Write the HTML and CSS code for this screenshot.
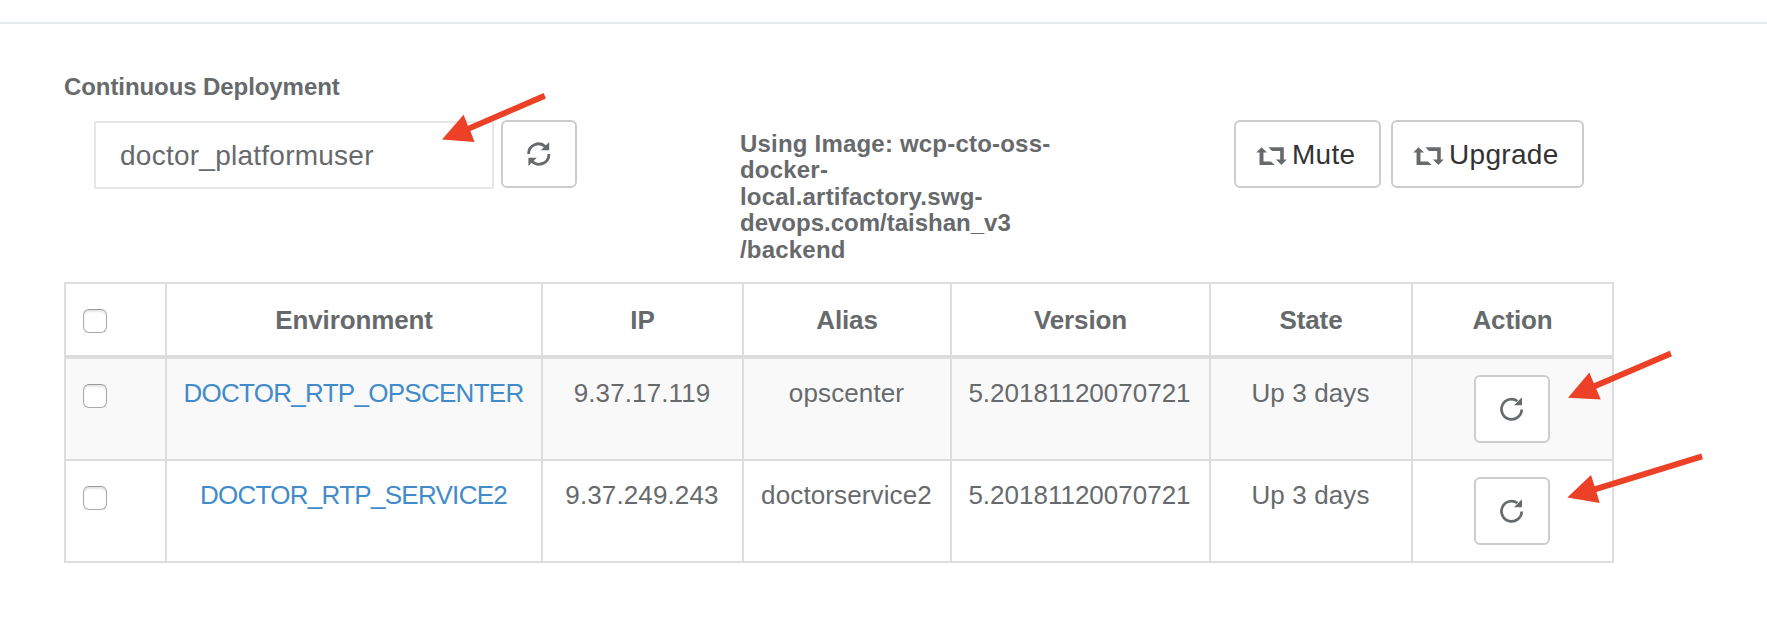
FILE: index.html
```html
<!DOCTYPE html>
<html lang="en">
<head>
<meta charset="utf-8">
<title>Continuous Deployment</title>
<link rel="stylesheet" href="styles.css">
</head>
<body>
<svg class="defs" width="0" height="0">
  <symbol id="retweet" viewBox="0 0 93 55">
    <path d="M16 1 33 17H22V44H45L56 55H10V17H0ZM37 1H84V38H93L77 55 60 38H73V12H48Z"/>
  </symbol>
  <symbol id="repeat" viewBox="0 0 24 24">
    <path d="M21.7 12.4A10.1 10.1 0 1 1 17.4 4" fill="none" stroke="#676a6c" stroke-width="2.7"/>
    <path d="M22 .3V8.3H14Z"/>
  </symbol>
  <symbol id="refresh" viewBox="0 0 24 24">
    <path d="M1.6 12A9.9 9.9 0 0 1 18.4 4.7M21.9 12A9.9 9.9 0 0 1 5 19.3" fill="none" stroke="#676a6c" stroke-width="2.8"/>
    <path d="M22.2 0V8.2H13.8ZM1.4 24V15.8H9.8Z"/>
  </symbol>
</svg>
<div class="topline"></div>
<main class="panel">
  <h5 class="title">Continuous Deployment</h5>
  <div class="toolbar">
    <input class="user" type="text" value="doctor_platformuser">
    <button class="btn square"><svg class="icon"><use href="#refresh"/></svg></button>
    <h5 class="image">Using Image: wcp-cto-oss-<br>docker-<br>local.artifactory.swg-<br><span class="path">devops.com/taishan_v3</span><br>/backend</h5>
    <div class="actions">
      <button class="btn mute"><svg class="retweet"><use href="#retweet"/></svg><span class="label">Mute</span></button>
      <button class="btn upgrade"><svg class="retweet"><use href="#retweet"/></svg><span class="label">Upgrade</span></button>
    </div>
  </div>
  <table class="grid">
    <colgroup><col class="c1"><col class="c2"><col class="c3"><col class="c4"><col class="c5"><col class="c6"><col class="c7"></colgroup>
    <thead>
      <tr><th class="check"><input type="checkbox"></th><th>Environment</th><th>IP</th><th>Alias</th><th>Version</th><th>State</th><th>Action</th></tr>
    </thead>
    <tbody>
      <tr><td class="check"><input type="checkbox"></td><td><a>DOCTOR_RTP_OPSCENTER</a></td><td>9.37.17.119</td><td>opscenter</td><td class="version">5.20181120070721</td><td>Up 3 days</td><td class="action"><button class="btn square"><svg class="icon"><use href="#repeat"/></svg></button></td></tr>
      <tr><td class="check"><input type="checkbox"></td><td><a>DOCTOR_RTP_SERVICE2</a></td><td>9.37.249.243</td><td>doctorservice2</td><td class="version">5.20181120070721</td><td>Up 3 days</td><td class="action"><button class="btn square"><svg class="icon"><use href="#repeat"/></svg></button></td></tr>
    </tbody>
  </table>
</main>
<svg class="arrows" width="1767" height="629" viewBox="0 0 1767 629">
  <path d="M442 139.5 463.6 114.7 468 125.7 543.6 93 546 98.5 470.4 131 474.6 142Z"/>
  <path d="M1568 397.7 1589.3 372.6 1593.8 383.3 1669.7 350.7 1672 356.3 1596.2 388.8 1600.8 399.4Z"/>
  <path d="M1567.3 497.4 1591 475 1594.6 486.3 1701.3 453.6 1702.9 459.2 1596.4 491.9 1599.7 503.1Z"/>
</svg>
</body>
</html>
```

FILE: styles.css
```css
* { box-sizing: border-box; }
body {
  margin: 0;
  width: 1767px;
  height: 629px;
  overflow: hidden;
  background: #fff;
  color: #676a6c;
  font: 26px/37px "Liberation Sans", Arial, sans-serif;
}
.defs { display: block; }
svg { fill: #676a6c; }
.topline { height: 2px; margin-top: 22px; background: #e7eaec; }
.panel { padding: 50px 0 0 64px; }
.title, .image { margin: 0; font-size: 24px; line-height: 26.4px; font-weight: 700; }
.title { height: 46px; letter-spacing: -0.08px; }
.toolbar { display: flex; align-items: flex-start; height: 162px; padding-left: 30px; }
.user {
  width: 400px;
  height: 68px;
  margin: 1px 7px 0 0;
  padding: 2px 24px 0;
  border: 2px solid #e5e6e7;
  border-radius: 2px;
  background: #fff;
  color: #676a6c;
  font: 28px "Liberation Sans", Arial, sans-serif;
  letter-spacing: 0.25px;
}
.btn {
  display: inline-flex;
  align-items: center;
  height: 68px;
  padding: 0 0 0 20px;
  border: 2px solid #ccc;
  border-radius: 6px;
  background: #fff;
  color: #333;
  font: 28px "Liberation Sans", Arial, sans-serif;
}
.square { width: 76px; padding: 0; justify-content: center; }
.icon { width: 24px; height: 24px; }
.image { width: 320px; margin: 11px 0 0 163px; letter-spacing: 0.2px; }
.path { letter-spacing: 0; }
.actions { display: flex; gap: 10px; margin-left: 174px; }
.mute { width: 147px; }
.upgrade { width: 193px; }
.retweet { width: 31px; height: 18px; margin: 3px 5px 0 0; }
.label { padding-top: 2px; letter-spacing: 0.3px; }
.grid {
  table-layout: fixed;
  width: 1550px;
  border-spacing: 0;
  border: solid #ddd;
  border-width: 2px 0 0 2px;
}
.c1 { width: 101px; }
.c2 { width: 376px; }
.c3 { width: 201px; }
.c4 { width: 208px; }
.c5 { width: 259px; }
.c6 { width: 202px; }
.c7 { width: 201px; }
th, td {
  padding: 16px 0 0;
  border: solid #ddd;
  border-width: 0 2px 2px 0;
  text-align: center;
  vertical-align: top;
  white-space: nowrap;
}
th { height: 75px; padding-top: 18px; border-bottom-width: 4px; letter-spacing: -0.12px; }
td { height: 102px; padding-right: 1px; letter-spacing: 0.12px; }
tbody tr:first-child { background: #f9f9f9; }
.check { padding-left: 17px; text-align: left; }
.check input {
  appearance: none;
  display: block;
  width: 24px;
  height: 24px;
  margin: 7px 0 0;
  border: 1px solid #aaa;
  border-top-color: #999;
  border-radius: 6px;
  background: #fff;
  box-shadow: inset 0 2px 2px #e4e4e4;
}
td.check input { margin-top: 9px; }
a { color: #428bca; letter-spacing: -0.72px; }
.version { padding-right: 2px; letter-spacing: 0; }
.action .btn { display: flex; margin: 0 auto; }
.arrows { position: absolute; left: 0; top: 0; fill: #ec4127; pointer-events: none; }
```
